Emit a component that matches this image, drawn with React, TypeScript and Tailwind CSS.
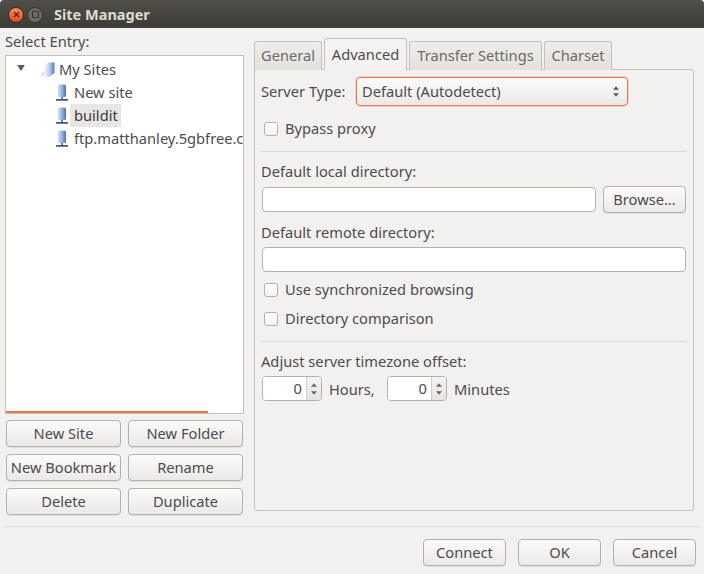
import React from 'react'

const Btn = ({ label, className = '' }: { label: string; className?: string }) => (
    <button className={`h-[27px] pb-[2px] rounded-[4px] border border-[#b5b0a9] bg-gradient-to-b from-[#fbfbfa] to-[#ebe9e7] text-[#4c4c4c] shadow-[0_1px_0_#e0deda] whitespace-nowrap ${className}`}>
        {label}
    </button>
)

const Tab = ({ label, className = '' }: { label: string; className?: string }) => (
    <div className={`h-[29px] pb-[2px] rounded-t-[3px] border border-b-0 border-[#c4c0ba] bg-gradient-to-b from-[#eeedeb] to-[#e3e1de] text-[#6d6a66] flex items-center justify-center ${className}`}>
        {label}
    </div>
)

const Check = ({ label, className = '' }: { label: string; className?: string }) => (
    <div className={`h-[15px] flex items-center ${className}`}>
        <div className="ml-[3px] w-[14px] h-[14px] rounded-[3px] border border-[#b5b0a9] bg-gradient-to-b from-white to-[#f4f3f2]" />
        <span className="ml-[7px] mb-[2px]">{label}</span>
    </div>
)

const Spin = ({ className = '' }: { className?: string }) => (
    <div className={`h-[25px] w-[60px] flex rounded-[4px] border border-[#b5b0a9] overflow-hidden ${className}`}>
        <div className="flex-1 bg-white text-right pr-[4px] leading-[23px]">0</div>
        <div className="w-[15px] border-l border-[#d0cdc8] bg-gradient-to-b from-[#f6f5f4] to-[#e6e4e1] flex flex-col items-center justify-center gap-[4px]">
            <svg width="6" height="4" viewBox="0 0 7 4"><path d="M3.5 0 7 4H0z" fill="#6a6864" /></svg>
            <svg width="6" height="4" viewBox="0 0 7 4"><path d="M0 0h7L3.5 4z" fill="#6a6864" /></svg>
        </div>
    </div>
)

const SiteIcon = () => (
    <svg width="12" height="18" viewBox="0 0 12 18" className="shrink-0">
        <defs>
            <linearGradient id="siteBlue" x1="0" x2="1" y1="0" y2="0">
                <stop offset="0" stopColor="#d5e1f4" />
                <stop offset="0.55" stopColor="#8fabdc" />
                <stop offset="1" stopColor="#4a70b8" />
            </linearGradient>
        </defs>
        <rect x="2" y="0.5" width="8" height="12.5" rx="1.5" fill="url(#siteBlue)" />
        <rect x="5" y="13" width="2" height="2.5" fill="#6f80a3" />
        <rect x="0" y="15" width="12" height="1.8" rx="0.5" fill="#3e5686" />
    </svg>
)

const FolderIcon = () => (
    <svg width="16" height="17" viewBox="0 0 16 17" className="shrink-0">
        <defs>
            <linearGradient id="folderBlue" x1="0" x2="1" y1="0" y2="0">
                <stop offset="0" stopColor="#f4f7fc" />
                <stop offset="0.5" stopColor="#b9cdec" />
                <stop offset="1" stopColor="#4a78c4" />
            </linearGradient>
        </defs>
        <path d="M5 14 1 16v-4l4-2z" fill="#dfe3ea" />
        <path d="M5 5 8 1.5h6.5V12L9 16H4.5z" fill="url(#folderBlue)" />
    </svg>
)

const SiteRow = ({ label, selected = false }: { label: string; selected?: boolean }) => (
    <div className="h-[23px] flex items-center pl-[50px]">
        <SiteIcon />
        <span className={`ml-[2px] pl-[4px] pr-[3px] h-[23px] leading-[23px] whitespace-nowrap ${selected ? 'bg-[#e8e6e3] text-[#3c3c3c]' : ''}`}>{label}</span>
    </div>
)

const App = () => {
    return (
        <div className="w-[704px] h-[574px] bg-[#f2f1f0] text-[#4c4c4c] text-[14.67px] overflow-hidden flex flex-col" style={{ fontFamily: '"Noto Sans", sans-serif' }}>
            {/* title bar */}
            <div className="h-[28px] shrink-0 flex items-center rounded-t-[4px] bg-gradient-to-b from-[#504f4a] to-[#3c3b37] pl-[8px] pt-px">
                <div className="w-[16px] h-[16px] rounded-full bg-gradient-to-b from-[#f58c5f] to-[#e1491c] border border-[#3a2a20] flex items-center justify-center">
                    <svg width="7" height="7" viewBox="0 0 7 7"><path d="M1 1l5 5M6 1l-5 5" stroke="#5a1f0a" strokeWidth="1.2" /></svg>
                </div>
                <div className="ml-[3px] w-[16px] h-[16px] rounded-full bg-[#6b6a65] border border-[#38372f] flex items-center justify-center">
                    <div className="w-[7px] h-[7px] rounded-[1px] border border-[#33322d]" />
                </div>
                <span className="ml-[11px] font-bold text-[#dfdbd2] text-[14.5px]">Site Manager</span>
            </div>

            <div className="flex-1 flex pt-px">
                {/* left column */}
                <div className="w-[254px] shrink-0 pl-[5px] flex flex-col">
                    <div className="h-[26px] leading-[24px]">Select Entry:</div>
                    <div className="w-[239px] h-[359px] border border-[#c4c0ba] bg-white overflow-hidden relative pt-[2px]">
                        <div className="h-[23px] flex items-center pl-[11px]">
                            <svg width="8" height="6" viewBox="0 0 9 7" className="shrink-0 mb-[4px]"><path d="M0 0h9L4.5 7z" fill="#5c5a56" /></svg>
                            <div className="ml-[15px]"><FolderIcon /></div>
                            <span className="ml-[3px] mb-[2px] whitespace-nowrap">My Sites</span>
                        </div>
                        <SiteRow label="New site" />
                        <SiteRow label="buildit" selected />
                        <SiteRow label="ftp.matthanley.5gbfree.com" />
                        <div className="absolute left-[-1px] bottom-[-1px] w-[203px] h-[3px] bg-[#e9784a]" />
                    </div>
                    <div className="mt-[6px] ml-[1px] w-[237px] grid grid-cols-2 gap-x-[7px] gap-y-[7px]">
                        <Btn label="New Site" />
                        <Btn label="New Folder" />
                        <Btn label="New Bookmark" />
                        <Btn label="Rename" />
                        <Btn label="Delete" />
                        <Btn label="Duplicate" />
                    </div>
                </div>

                {/* right column */}
                <div className="flex flex-col pt-[9px]">
                    <div className="flex items-end gap-[2px] h-[32px] relative z-10 mb-[-1px]">
                        <Tab label="General" className="w-[68px]" />
                        <div className="w-[83px] h-[32px] pb-[2px] rounded-t-[3px] border border-b-0 border-[#c4c0ba] bg-[#f4f3f2] flex items-center justify-center">Advanced</div>
                        <Tab label="Transfer Settings" className="w-[133px]" />
                        <Tab label="Charset" className="w-[68px]" />
                    </div>
                    <div className="w-[440px] h-[442px] rounded-b-[3px] rounded-tr-[3px] border border-[#c4c0ba] pl-[6px] pt-[7px] pr-[6px]">
                        <div className="flex items-center h-[29px]">
                            <span className="w-[95px] mb-[2px]">Server Type:</span>
                            <div className="w-[272px] h-[29px] rounded-[4px] border border-[#e9784a] shadow-[0_0_0_1px_rgba(233,120,74,0.25)] bg-gradient-to-b from-[#fbfbfa] to-[#ebe9e7] flex items-center justify-between pl-[5px] pr-[8px]">
                                <span className="mb-[2px]">Default (Autodetect)</span>
                                <div className="flex flex-col gap-[3px]">
                                    <svg width="6" height="4" viewBox="0 0 7 4"><path d="M3.5 0 7 4H0z" fill="#5c5a56" /></svg>
                                    <svg width="6" height="4" viewBox="0 0 7 4"><path d="M0 0h7L3.5 4z" fill="#5c5a56" /></svg>
                                </div>
                            </div>
                        </div>
                        <Check label="Bypass proxy" className="mt-[15px]" />
                        <div className="mt-[15px] h-px w-[426px] bg-[#dcdad6]" />
                        <div className="mt-[9px] h-[20px] leading-[20px]">Default local directory:</div>
                        <div className="mt-[5px] flex items-center">
                            <div className="ml-px w-[334px] h-[25px] rounded-[4px] border border-[#b5b0a9] bg-white" />
                            <Btn label="Browse..." className="ml-[7px] w-[83px]" />
                        </div>
                        <div className="mt-[9px] h-[20px] leading-[20px]">Default remote directory:</div>
                        <div className="mt-[5px] ml-px w-[424px] h-[25px] rounded-[4px] border border-[#b5b0a9] bg-white" />
                        <Check label="Use synchronized browsing" className="mt-[10px]" />
                        <Check label="Directory comparison" className="mt-[14px]" />
                        <div className="mt-[15px] h-px w-[426px] bg-[#dcdad6]" />
                        <div className="mt-[9px] h-[20px] leading-[20px]">Adjust server timezone offset:</div>
                        <div className="mt-[5px] ml-px flex items-center">
                            <Spin />
                            <span className="ml-[7px] w-[58px]">Hours,</span>
                            <Spin />
                            <span className="ml-[7px]">Minutes</span>
                        </div>
                    </div>
                </div>
            </div>

            {/* bottom bar */}
            <div className="mx-[5px] w-[694px] h-px bg-[#dcdad6]" />
            <div className="h-[47px] shrink-0 flex justify-end items-start pt-[12px] pr-[8px] gap-[12px]">
                <Btn label="Connect" className="w-[83px]" />
                <Btn label="OK" className="w-[83px]" />
                <Btn label="Cancel" className="w-[83px]" />
            </div>
        </div>
    )
}

export default App
